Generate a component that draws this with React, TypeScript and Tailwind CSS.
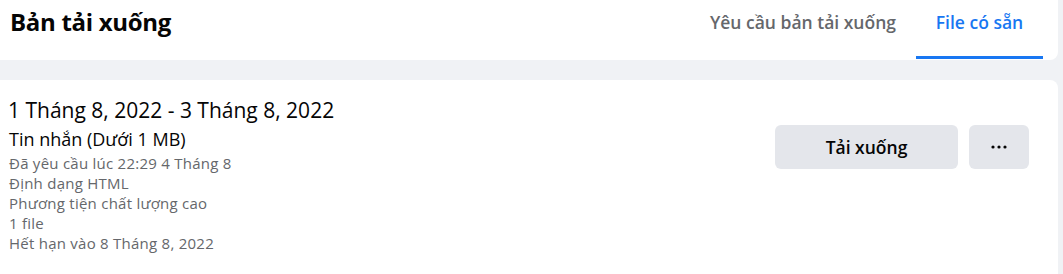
export default function App() {
  const details = [
    "Đã yêu cầu lúc 22:29 4 Tháng 8",
    "Định dạng HTML",
    "Phương tiện chất lượng cao",
    "1 file",
    "Hết hạn vào 8 Tháng 8, 2022",
  ];

  return (
    <div
      className="w-[1063px] h-[274px] overflow-hidden bg-[#f0f2f5] pr-[5px]"
      style={{ fontFamily: '"Open Sans", "Noto Sans", sans-serif' }}
    >
      <header className="h-[60px] bg-white rounded-br-lg flex items-stretch justify-between pl-[10px] pr-[15px]">
        <h1 className="text-[24px] font-bold text-[#050505] leading-none pt-[10px] tracking-[-0.3px]">
          Bản tải xuống
        </h1>
        <nav className="flex items-stretch">
          <button className="px-[20px] text-[17.5px] font-semibold text-[#65676b] pb-[16px]">
            Yêu cầu bản tải xuống
          </button>
          <button className="relative w-[127px] text-[17.5px] font-semibold text-[#1877f2] pb-[16px]">
            File có sẵn
            <span className="absolute left-0 right-0 bottom-[1px] h-[3px] bg-[#1877f2]" />
          </button>
        </nav>
      </header>

      <section className="mt-[20px] h-[194px] bg-white rounded-tr-lg flex justify-between pl-[8px] pr-[29px]">
        <div className="pt-[17px]">
          <div className="text-[21px] text-[#050505] leading-[26px]">
            1 Tháng 8, 2022 - 3 Tháng 8, 2022
          </div>
          <div className="text-[18px] text-[#050505] leading-[22px] mt-[5px] pl-[1px]">Tin nhắn (Dưới 1 MB)</div>
          <div className="mt-[3px]">
            {details.map((d) => (
              <div key={d} className="text-[15px] tracking-[0.25px] text-[#65676b] leading-[20px] pl-[1px]">
                {d}
              </div>
            ))}
          </div>
        </div>
        <div className="flex gap-[11px] pt-[45px]">
          <button className="w-[183px] h-[44px] rounded-md bg-[#e4e6eb] text-[17.5px] font-semibold text-[#050505]">
            Tải xuống
          </button>
          <button className="w-[60px] h-[44px] rounded-md bg-[#e4e6eb] flex items-center justify-center">
            <svg width="16" height="4" viewBox="0 0 16 4" fill="#050505">
              <circle cx="2" cy="2" r="1.6" />
              <circle cx="8" cy="2" r="1.6" />
              <circle cx="14" cy="2" r="1.6" />
            </svg>
          </button>
        </div>
      </section>
    </div>
  );
}
